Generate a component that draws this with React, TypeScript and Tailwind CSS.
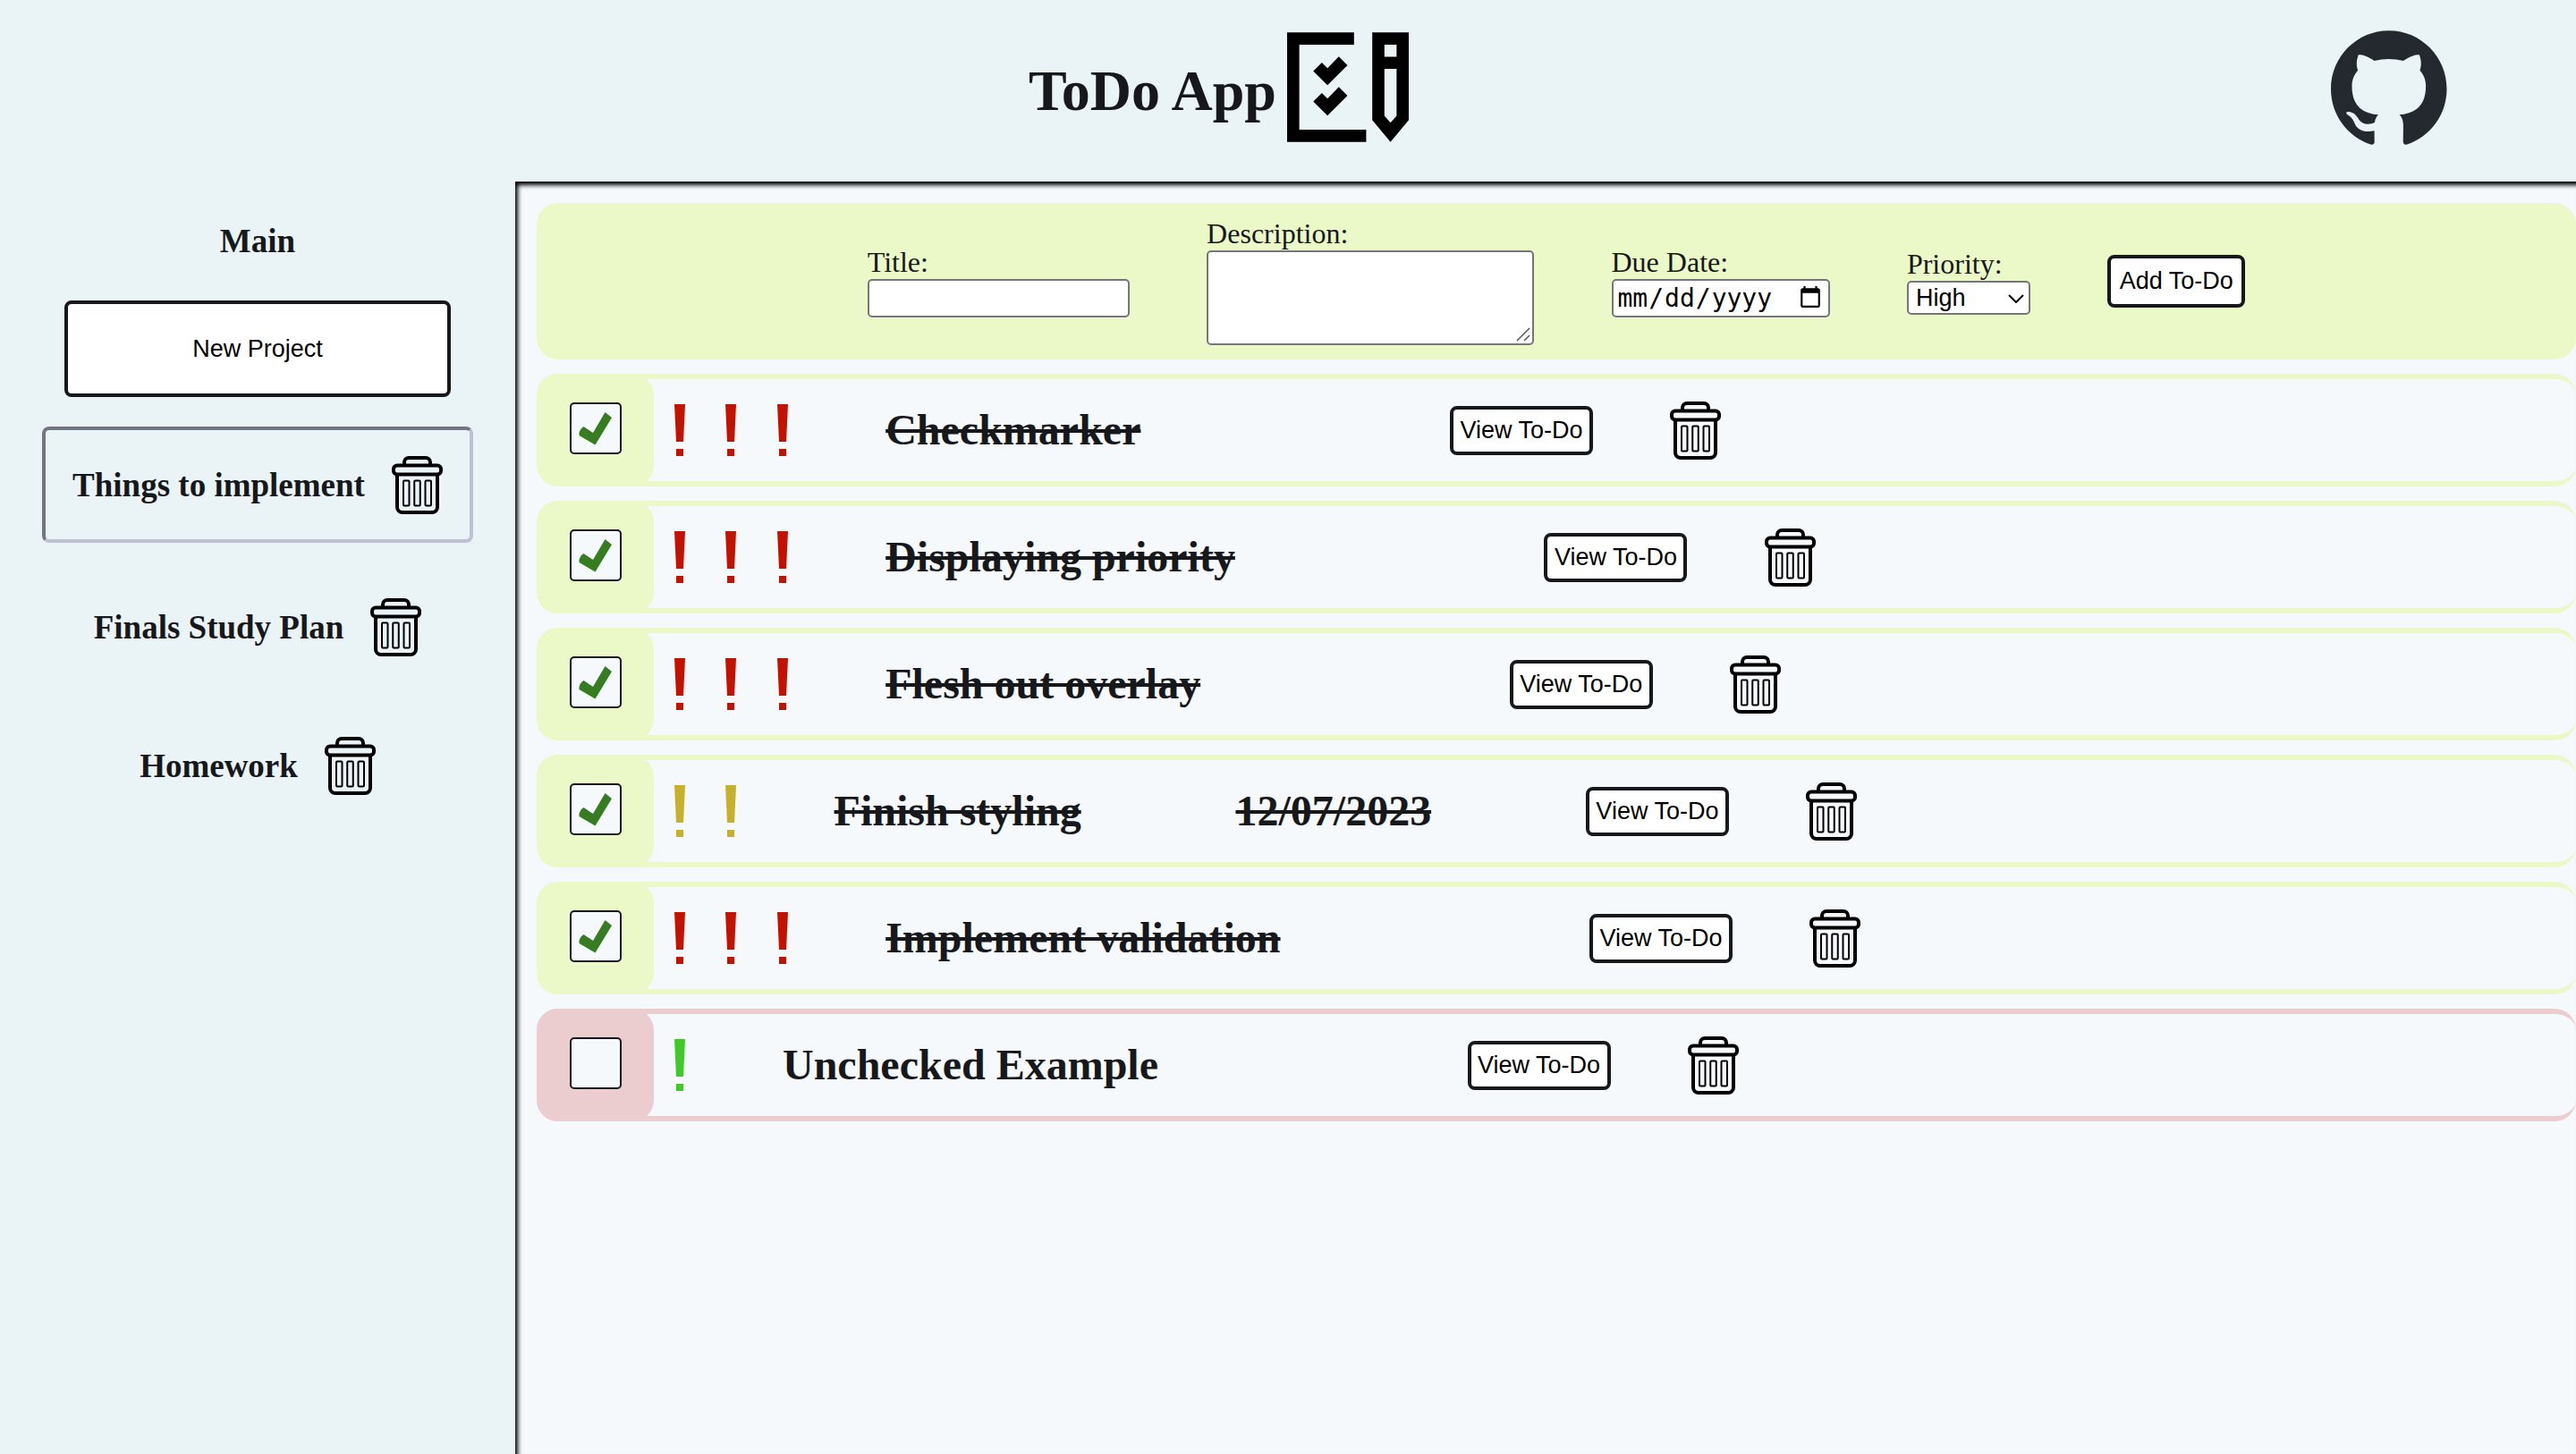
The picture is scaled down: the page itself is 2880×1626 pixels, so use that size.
import { useState } from "react";

type Priority = "High" | "Medium" | "Low";

interface Todo {
  title: string;
  date?: string;
  priority: Priority;
  done: boolean;
}

const initialTodos: Todo[] = [
  { title: "Checkmarker", priority: "High", done: true },
  { title: "Displaying priority", priority: "High", done: true },
  { title: "Flesh out overlay", priority: "High", done: true },
  { title: "Finish styling", date: "12/07/2023", priority: "Medium", done: true },
  { title: "Implement validation", priority: "High", done: true },
  { title: "Unchecked Example", priority: "Low", done: false },
];

const projects = ["Things to implement", "Finals Study Plan", "Homework"];

const marks: Record<Priority, { count: number; color: string }> = {
  High: { count: 3, color: "text-[#c41200]" },
  Medium: { count: 2, color: "text-[#c6b02c]" },
  Low: { count: 1, color: "text-[#41c829]" },
};

function ListIcon() {
  return (
    <svg viewBox="0 0 10 9" className="mb-2 h-[123px] w-[136px]" aria-hidden="true">
      <path d="M0 0H5.5V1H1V8H6.5V9H0Z" />
      <path d="M2.15 3.18 2.86 2.47 3.32 2.93 4.25 1.98 4.96 2.69 3.32 4.33Z" />
      <path d="M2.15 5.68 2.86 4.97 3.32 5.43 4.25 4.48 4.96 5.19 3.32 6.83Z" />
      <path fillRule="evenodd" d="M7 0H10V7.2L8.5 9 7 7.2ZM8 1V2H9V1ZM8 3V6.85L8.5 7.43 9 6.85V3Z" />
    </svg>
  );
}

function GithubIcon() {
  return (
    <svg viewBox="0 0 98 96" className="h-[130px] w-[130px] fill-[#24292f]" aria-hidden="true">
      <path d="M48.854 0C21.839 0 0 22 0 49.217c0 21.756 13.993 40.172 33.405 46.69 2.427.49 3.316-1.059 3.316-2.362 0-1.141-.08-5.052-.08-9.127-13.59 2.934-16.42-5.867-16.42-5.867-2.184-5.704-5.42-7.17-5.42-7.17-4.448-3.015.324-3.015.324-3.015 4.934.326 7.523 5.052 7.523 5.052 4.367 7.496 11.404 5.378 14.235 4.074.404-3.178 1.699-5.378 3.074-6.6-10.839-1.141-22.243-5.378-22.243-24.283 0-5.378 1.94-9.778 5.014-13.2-.485-1.222-2.184-6.275.486-13.038 0 0 4.125-1.304 13.426 5.052a46.97 46.97 0 0 1 12.214-1.63c4.125 0 8.33.571 12.213 1.63 9.302-6.356 13.427-5.052 13.427-5.052 2.67 6.763.97 11.816.485 13.038 3.155 3.422 5.015 7.822 5.015 13.2 0 18.905-11.404 23.06-22.324 24.283 1.78 1.548 3.316 4.481 3.316 9.126 0 6.6-.08 11.897-.08 13.526 0 1.304.89 2.853 3.316 2.364 19.412-6.52 33.405-24.935 33.405-46.691C97.707 22 75.788 0 48.854 0z" />
    </svg>
  );
}

function TrashIcon() {
  return (
    <svg viewBox="0 0 57 65" className="h-[65px] w-[57px]" fill="none" stroke="#000" aria-hidden="true">
      <path strokeWidth="4" d="M14 9.500V7a5 5 0 0 1 5-5H38a5 5 0 0 1 5 5V9.500" />
      <rect strokeWidth="4" x="2" y="10.500" width="53" height="10" rx="4" />
      <path strokeWidth="4" d="M6 21V57a6 6 0 0 0 6 6H45a6 6 0 0 0 6-6V21" />
      <g strokeWidth="2">
        <rect x="13" y="27.500" width="6.500" height="28" rx="1" />
        <rect x="25.250" y="27.500" width="6.500" height="28" rx="1" />
        <rect x="37.500" y="27.500" width="6.500" height="28" rx="1" />
      </g>
    </svg>
  );
}

function Mark() {
  return (
    <span className="flex w-[2vw] justify-center">
      <svg viewBox="0 0 12 58" className="h-[58px] w-3" fill="currentColor" aria-hidden="true">
        <path d="M0 0H12L10 42H2Z" />
        <path d="M2 50H10V58H2Z" />
      </svg>
    </span>
  );
}

function TodoRow({ todo, onToggle }: { todo: Todo; onToggle: () => void }) {
  const { count, color } = marks[todo.priority];
  const strike = todo.done ? "line-through" : "";
  return (
    <li className={`flex h-[126px] items-center rounded-3xl border-y-6 ${todo.done ? "border-[#ebf9c8]" : "border-[#ebcdd0]"}`}>
      <div className={`flex h-[126px] w-[131px] shrink-0 items-center justify-center rounded-3xl pb-1 ${todo.done ? "bg-[#ebf9c8]" : "bg-[#ebcdd0]"}`}>
        <label className="relative block">
          <input
            type="checkbox"
            checked={todo.done}
            onChange={onToggle}
            aria-label={todo.title}
            className="peer block size-[58px] appearance-none rounded-[5px] border-2 border-[#17181b] bg-[#f5f9fc]"
          />
          <svg viewBox="0 0 58 58" className="pointer-events-none absolute inset-0 hidden size-full fill-[#367c21] peer-checked:block" aria-hidden="true">
            <path d="M10.500 34Q12 29 15.500 27L26 34 39.500 11 47 17 28.500 47.500 10.500 37Z" />
          </svg>
        </label>
      </div>
      <div className={`flex ${color}`} role="img" aria-label={`${todo.priority} priority`}>
        {Array.from({ length: count }, (_, i) => (
          <Mark key={i} />
        ))}
      </div>
      <h2 className={`mx-[3vw] text-5xl font-bold ${strike}`}>{todo.title}</h2>
      <p className={`mx-[3vw] text-5xl font-bold ${strike}`}>{todo.date}</p>
      <button type="button" className="mx-[3vw] h-[55px] w-40 rounded-lg border-4 border-[#17181b] bg-white font-[Liberation_Sans,sans-serif] text-[27px] leading-8 text-black">
        View To-Do
      </button>
      <button type="button" aria-label={`Delete ${todo.title}`}>
        <TrashIcon />
      </button>
    </li>
  );
}

const field = "rounded-[5px] border-2 border-[#767676] bg-white font-[Liberation_Sans,sans-serif] text-[27px] text-black";

function TodoForm() {
  return (
    <form className="flex items-center justify-center gap-[3vw] rounded-3xl bg-[#ebf9c8] py-4 text-[32px] leading-[37px]" onSubmit={(e) => e.preventDefault()}>
      <div className="flex flex-col">
        <label htmlFor="title">Title:</label>
        <input id="title" type="text" className={`h-[43px] w-[293px] px-1 ${field}`} />
      </div>
      <div className="flex flex-col">
        <label htmlFor="description">Description:</label>
        <div className="relative">
          <textarea id="description" className={`block h-[106px] w-[366px] resize-none p-1 ${field}`} />
          <svg viewBox="0 0 16 16" className="pointer-events-none absolute right-1 bottom-1 size-4" fill="none" stroke="#555" strokeWidth="1.500" aria-hidden="true">
            <path d="M1 15 15 1M9 15 15 9" />
          </svg>
        </div>
      </div>
      <div className="flex flex-col">
        <label htmlFor="due">Due Date:</label>
        <input id="due" type="date" className="h-[43px] w-[244px] rounded-[5px] border-2 border-[#767676] bg-white px-1 font-[DejaVu_Sans_Mono,monospace] text-[28px] text-black" />
      </div>
      <div className="flex flex-col">
        <label htmlFor="priority">Priority:</label>
        <div className="relative">
          <select id="priority" className={`block h-[38px] w-[138px] appearance-none px-2 leading-8 ${field}`}>
            <option>High</option>
            <option>Medium</option>
            <option>Low</option>
          </select>
          <svg viewBox="0 0 18 10" className="pointer-events-none absolute top-[15px] right-[7px] h-[10px] w-[18px]" fill="none" stroke="#000" strokeWidth="2" aria-hidden="true">
            <path d="M1 1 9 9 17 1" />
          </svg>
        </div>
      </div>
      <button type="submit" className="h-[59px] w-[154px] rounded-lg border-4 border-[#17181b] bg-white font-[Liberation_Sans,sans-serif] text-[27px] text-black">
        Add To-Do
      </button>
    </form>
  );
}

export default function App() {
  const [todos, setTodos] = useState(initialTodos);
  const toggle = (index: number) =>
    setTodos((list) => list.map((t, i) => (i === index ? { ...t, done: !t.done } : t)));

  return (
    <div className="flex min-h-screen flex-col bg-[#eaf3f6] font-[Liberation_Serif,serif] text-[#17181b]">
      <header className="flex h-[203px] items-center pr-[5vw] pl-[131px]">
        <div className="flex flex-1 items-center justify-center gap-3 pr-3">
          <h1 className="text-[64px] font-bold">ToDo App</h1>
          <ListIcon />
        </div>
        <a href="https://github.com" aria-label="GitHub" className="mb-2">
          <GithubIcon />
        </a>
      </header>
      <div className="grid flex-1 grid-cols-[1fr_4fr]">
        <nav className="flex flex-col items-center gap-[33px] pt-[46px]" aria-label="Projects">
          <h3 className="mb-3 text-[37px] leading-[42px] font-bold">Main</h3>
          <button type="button" className="h-[108px] w-3/4 rounded-lg border-4 border-[#17181b] bg-white font-[Liberation_Sans,sans-serif] text-[27px] text-black">
            New Project
          </button>
          {projects.map((name, i) => (
            <div
              key={name}
              className={`flex items-center justify-center gap-[30px] px-[30px] ${
                i === 0
                  ? "h-[130px] rounded-lg border-4 border-t-[#737582] border-r-[#bec1d4] border-b-[#bec1d4] border-l-[#737582]"
                  : "h-[122px]"
              }`}
            >
              <h3 className="pt-0.5 text-[37px] font-bold">{name}</h3>
              <button type="button" aria-label={`Delete ${name}`}>
                <TrashIcon />
              </button>
            </div>
          ))}
        </nav>
        <main className="flex flex-col gap-4 bg-[#f5f9fc] pt-6 pl-6 shadow-[inset_0_9px_5px_-5px_#000,inset_8px_0_5px_-5px_#000]">
          <TodoForm />
          <ul className="flex flex-col gap-4">
            {todos.map((todo, i) => (
              <TodoRow key={todo.title} todo={todo} onToggle={() => toggle(i)} />
            ))}
          </ul>
        </main>
      </div>
    </div>
  );
}
